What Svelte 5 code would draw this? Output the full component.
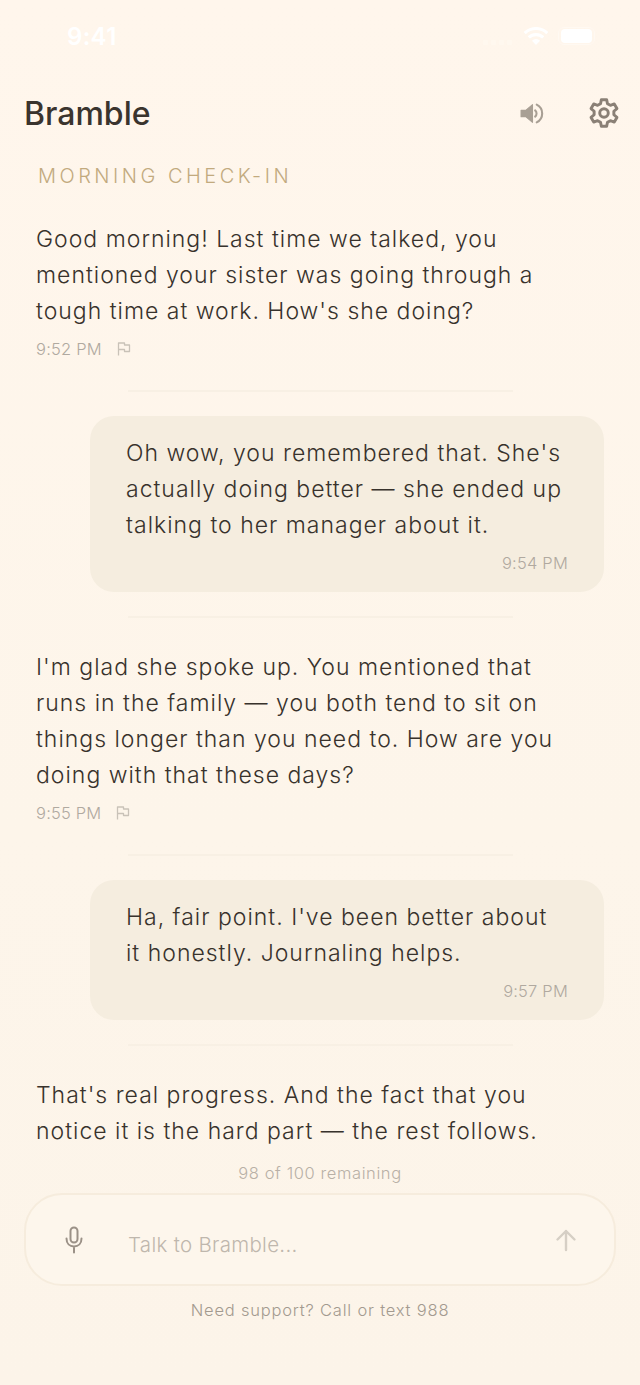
<script lang="ts">
	interface Message {
		from: 'ai' | 'me';
		lines: string;
		time: string;
	}

	const messages: Message[] = [
		{
			from: 'ai',
			lines: "Good morning! Last time we talked, you\nmentioned your sister was going through a\ntough time at work. How's she doing?",
			time: '9:52 PM'
		},
		{
			from: 'me',
			lines: "Oh wow, you remembered that. She's\nactually doing better — she ended up\ntalking to her manager about it.",
			time: '9:54 PM'
		},
		{
			from: 'ai',
			lines: "I'm glad she spoke up. You mentioned that\nruns in the family — you both tend to sit on\nthings longer than you need to. How are you\ndoing with that these days?",
			time: '9:55 PM'
		},
		{
			from: 'me',
			lines: "Ha, fair point. I've been better about\nit honestly. Journaling helps.",
			time: '9:57 PM'
		}
	];
</script>

<div class="screen">
	<div class="status">
		<span class="clock">9:41</span>
		<div class="status-icons">
			<div class="signal">
				<i></i><i></i><i></i><i></i>
			</div>
			<svg class="wifi" viewBox="0 0 22 16" fill="#fff">
				<path d="M11 16 7.4 12.2a5.2 5.2 0 0 1 7.2 0z" />
				<path d="M5.6 10.3 3.6 8.2a10.7 10.7 0 0 1 14.8 0l-2 2.1a7.800 7.800 0 0 0-10.800 0z" />
				<path d="M1.9 6.4 0 4.4a15.900 15.900 0 0 1 22 0l-1.900 2a13.200 13.200 0 0 0-18.200 0z" />
			</svg>
			<div class="battery"><div class="battery-fill"></div></div>
		</div>
	</div>

	<header>
		<h1>Bramble</h1>
		<div class="header-icons">
			<svg class="speaker" viewBox="0 0 23 22" fill="none">
				<path d="M1 8h4.500L12 2.500v17L5.500 14H1z" fill="#a89f94" stroke="#a89f94" stroke-width="1" stroke-linejoin="round" />
				<path d="M16 2.500c7 3.500 7 13.500 0 17" stroke="#a89f94" stroke-width="2" stroke-linecap="round" />
				<path d="M14.500 8c1.800 1.500 1.800 4.500 0 6" stroke="#a89f94" stroke-width="2" stroke-linecap="round" />
			</svg>
			<svg class="gear" viewBox="0 0 24 24" fill="none" stroke="#8a8076" stroke-width="2.200" stroke-linejoin="round">
				<path d="M10 2h4l.6 3 2.200 1.200 2.900-1 2 3.500-2.300 2 0 2.600 2.300 2-2 3.500-2.900-1-2.200 1.200-.6 3h-4l-.6-3-2.200-1.200-2.900 1-2-3.500 2.300-2 0-2.600-2.300-2 2-3.500 2.900 1L9.400 5z" />
				<circle cx="12" cy="12" r="3.200" />
			</svg>
		</div>
	</header>

	<div class="label">MORNING CHECK-IN</div>

	<main>
		{#each messages as m}
			{#if m.from === 'ai'}
				<div class="ai">
					<p>{m.lines}</p>
					<div class="ai-meta">
						<span class="time">{m.time}</span>
						<svg class="flag" viewBox="0 0 14 14" fill="none" stroke="#c9c2b8" stroke-width="1.300" stroke-linejoin="round">
							<path d="M1.500 13.500V1h6v2h5v6.500h-5v-2h-6" />
						</svg>
					</div>
				</div>
			{:else}
				<div class="me">
					<p>{m.lines}</p>
					<span class="time">{m.time}</span>
				</div>
			{/if}
			<div class="divider"></div>
		{/each}
		<div class="ai last">
			<p>{"That's real progress. And the fact that you\nnotice it is the hard part — the rest follows."}</p>
		</div>
	</main>

	<div class="remaining">98 of 100 remaining</div>

	<div class="composer">
		<svg class="mic" viewBox="0 0 20 28" fill="none" stroke="#9b9187" stroke-width="2" stroke-linecap="round">
			<rect x="6.500" y="1.500" width="7" height="15" rx="3.500" />
			<path d="M2.500 12.500c0 5 3.200 8 7.500 8s7.500-3 7.500-8M10 20.500v6" />
		</svg>
		<span class="placeholder">Talk to Bramble...</span>
		<svg class="send" viewBox="0 0 24 24" fill="none" stroke="#d6cfc5" stroke-width="2.400" stroke-linecap="round" stroke-linejoin="round">
			<path d="M12 22V3M3.500 11.500 12 3l8.500 8.500" />
		</svg>
	</div>

	<div class="support">Need support? Call or text 988</div>
</div>

<style>
	:global(body) {
		margin: 0;
		background: #fef6ec;
	}

	.screen {
		width: 640px;
		height: 1385px;
		overflow: hidden;
		display: flex;
		flex-direction: column;
		background: linear-gradient(180deg, #fff6ec 0%, #fdf5ea 60%, #fcf4e9 100%);
		font-family: Inter, "Liberation Sans", sans-serif;
		color: #3d3730;
	}

	.status {
		height: 72px;
		flex-shrink: 0;
		display: flex;
		align-items: center;
		justify-content: space-between;
		padding: 0 45px 0 67px;
	}

	.clock {
		color: #fff;
		font-size: 24px;
		font-weight: 600;
		letter-spacing: 0.3px;
	}

	.status-icons {
		display: flex;
		align-items: center;
		gap: 9px;
	}

	.signal {
		display: flex;
		align-items: flex-end;
		gap: 3px;
		height: 18px;
		margin-right: 2px;
	}

	.signal i {
		display: block;
		width: 5px;
		height: 5px;
		border-radius: 1px;
		background: #fff8ef;
	}

	.wifi {
		width: 26px;
		height: 18px;
	}

	.battery {
		width: 37px;
		height: 18px;
		box-sizing: border-box;
		padding: 1px 2px;
		border: 1px solid #fff9f2;
		border-radius: 6px;
	}

	.battery-fill {
		height: 100%;
		background: #fff;
		border-radius: 4px;
	}

	header {
		height: 82px;
		flex-shrink: 0;
		display: flex;
		align-items: center;
		justify-content: space-between;
		padding: 0 20px 0 24px;
		box-sizing: border-box;
		margin-bottom: 9px;
	}

	h1 {
		margin: 0;
		font-size: 32px;
		font-weight: 500;
		color: #3a342e;
	}

	.header-icons {
		display: flex;
		align-items: center;
		gap: 44px;
	}

	.speaker {
		width: 24px;
		height: 23px;
	}

	.gear {
		width: 32px;
		height: 32px;
	}

	.label {
		height: 26px;
		line-height: 26px;
		flex-shrink: 0;
		padding-left: 38px;
		font-size: 20px;
		font-weight: 300;
		letter-spacing: 3.500px;
		color: #c2aa7e;
	}

	main {
		flex: 1;
		min-height: 0;
		overflow: hidden;
		padding: 0 36px;
		margin-top: 32px;
	}

	p {
		margin: 0;
		white-space: pre-line;
		font-size: 23px;
		line-height: 36px;
		font-weight: 300;
		letter-spacing: 1px;
		color: #38322c;
	}

	.ai-meta {
		display: flex;
		align-items: center;
		gap: 15px;
		margin-top: 10px;
		height: 20px;
	}

	.time {
		font-size: 16.500px;
		line-height: 20px;
		font-weight: 300;
		letter-spacing: 0.2px;
		color: #b0a9a0;
	}

	.flag {
		width: 14px;
		height: 14px;
	}

	.me {
		margin-left: 54px;
		padding: 19px 36px 19px;
		background: #f5eddf;
		border-radius: 24px;
		display: flex;
		flex-direction: column;
	}

	.me .time {
		align-self: flex-end;
		margin-top: 10px;
	}

	.divider {
		width: 385px;
		height: 2px;
		margin: 24px auto 0;
		background: #f8f0e4;
	}

	.ai {
		padding-top: 31px;
		padding-bottom: 7px;
	}

	main > .ai:first-child {
		padding-top: 0;
	}

	.ai + .divider {
		margin-bottom: 24px;
	}

	.remaining {
		flex-shrink: 0;
		text-align: center;
		font-size: 16.500px;
		line-height: 22px;
		font-weight: 300;
		letter-spacing: 0.6px;
		color: #b8b0a6;
		margin-bottom: 9px;
	}

	.composer {
		flex-shrink: 0;
		width: 592px;
		height: 93px;
		margin: 0 24px;
		box-sizing: border-box;
		border: 2px solid #f6ecdd;
		border-radius: 38px;
		background: #fdf6ec;
		display: flex;
		align-items: center;
		padding: 0 36px 0 38px;
	}

	.mic {
		width: 20px;
		height: 28px;
		margin-top: 1px;
	}

	.placeholder {
		flex: 1;
		margin-left: 44px;
		margin-top: 10px;
		font-size: 20.500px;
		font-weight: 300;
		letter-spacing: 0.3px;
		color: #bfb7ad;
	}

	.send {
		width: 24px;
		height: 24px;
		margin-top: 1px;
	}

	.support {
		flex-shrink: 0;
		text-align: center;
		font-size: 16.500px;
		line-height: 22px;
		font-weight: 300;
		letter-spacing: 0.8px;
		color: #a39a8f;
		margin-top: 13px;
		margin-bottom: 64px;
	}
</style>
